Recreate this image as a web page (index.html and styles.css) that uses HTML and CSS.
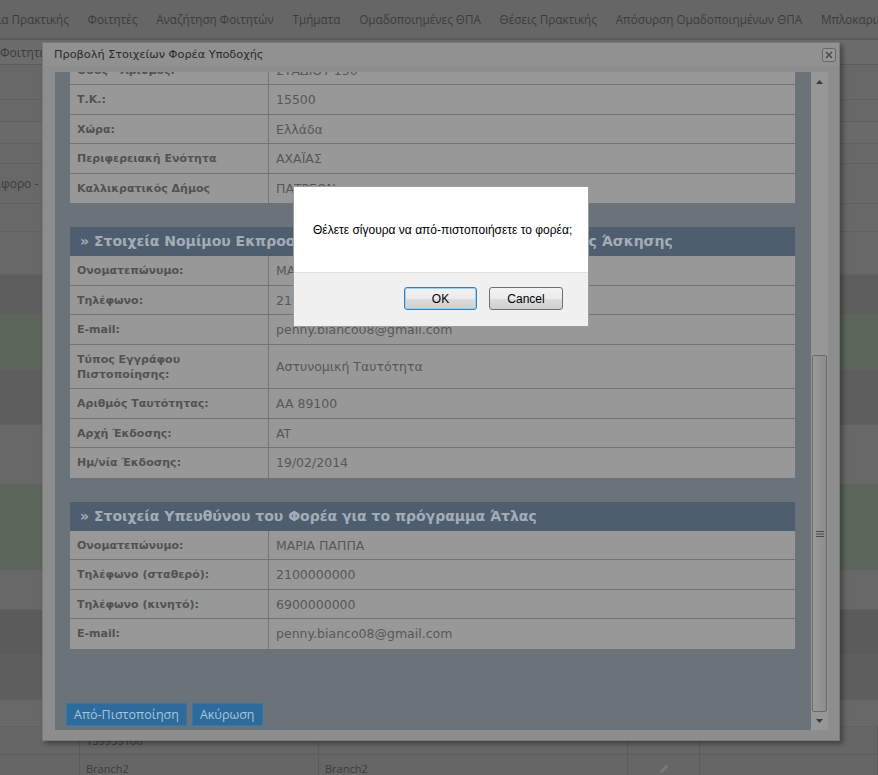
FILE: index.html
```html
<!DOCTYPE html>
<html lang="el">
<head>
<meta charset="utf-8">
<title>Προβολή Στοιχείων Φορέα Υποδοχής</title>
<link rel="stylesheet" href="styles.css">
</head>
<body>
<div class="page">
  <nav class="topnav">
    <a class="nav-first">ία Πρακτικής</a>
    <a>Φοιτητές</a>
    <a>Αναζήτηση Φοιτητών</a>
    <a>Τμήματα</a>
    <a>Ομαδοποιημένες ΘΠΑ</a>
    <a>Θέσεις Πρακτικής</a>
    <a>Απόσυρση Ομαδοποιημένων ΘΠΑ</a>
    <a>Μπλοκαρισμένοι Φοιτητές</a>
  </nav>
  <div class="subnav"><span>Φοιτητές</span></div>
  <div class="bg-list">
    <div class="bg-row h35"></div>
    <div class="bg-row h22"></div>
    <div class="bg-row h22 alt"></div>
    <div class="bg-row h20"></div>
    <div class="bg-row h40 with-text"><span class="clip-text">ιφορο -</span></div>
    <div class="bg-row h28"></div>
    <div class="bg-row h43"></div>
    <div class="bg-row h40 dark"></div>
    <div class="bg-row h55 green"></div>
    <div class="bg-row h55 dark"></div>
    <div class="bg-row h60"></div>
    <div class="bg-row h85 green"></div>
    <div class="bg-row h40"></div>
    <div class="bg-row h45 darker"></div>
    <div class="bg-row h45 dark"></div>
    <div class="bg-row h27"></div>
  </div>
  <div class="bg-table">
    <div class="bg-cell"></div><div class="bg-cell">159959100</div><div class="bg-cell"></div><div class="bg-cell"></div><div class="bg-cell"></div>
    <div class="bg-cell"></div><div class="bg-cell">Branch2</div><div class="bg-cell">Branch2</div>
    <div class="bg-cell icon-cell"><svg width="12" height="12" viewBox="0 0 12 12"><path d="M2 10 L3 7 L8 2 L10 4 L5 9 Z" fill="#7a7a7a"/></svg></div>
    <div class="bg-cell"></div>
  </div>
</div>

<div class="dialog">
  <div class="dlg-title">
    <span>Προβολή Στοιχείων Φορέα Υποδοχής</span>
    <span class="dlg-close"><svg width="14" height="14" viewBox="0 0 14 14"><rect x="0.5" y="0.5" width="13" height="13" rx="2" fill="#979797" stroke="#666"/><path d="M4 4 L10 10 M10 4 L4 10" stroke="#454545" stroke-width="1.4"/></svg></span>
  </div>
  <div class="dlg-body">
    <div class="scroll-view">
      <div class="scroll-content">
        <table class="info first-table">
          <tr><td class="lbl">Οδός - Αριθμός:</td><td class="val">ΣΤΑΔΙΟΥ 150</td></tr>
          <tr><td class="lbl">Τ.Κ.:</td><td class="val">15500</td></tr>
          <tr><td class="lbl">Χώρα:</td><td class="val">Ελλάδα</td></tr>
          <tr><td class="lbl">Περιφερειακή Ενότητα</td><td class="val">ΑΧΑΪΑΣ</td></tr>
          <tr><td class="lbl">Καλλικρατικός Δήμος</td><td class="val">ΠΑΤΡΕΩΝ</td></tr>
        </table>

        <div class="sec-head">» Στοιχεία Νομίμου Εκπροσώπου του Φορέα Υποδοχής Πρακτικής Άσκησης</div>
        <table class="info">
          <tr><td class="lbl">Ονοματεπώνυμο:</td><td class="val">ΜΑΡΙΑ ΠΑΠΠΑ</td></tr>
          <tr><td class="lbl">Τηλέφωνο:</td><td class="val">2100000000</td></tr>
          <tr><td class="lbl">E-mail:</td><td class="val">penny.bianco08@gmail.com</td></tr>
          <tr><td class="lbl">Τύπος Εγγράφου Πιστοποίησης:</td><td class="val">Αστυνομική Ταυτότητα</td></tr>
          <tr><td class="lbl">Αριθμός Ταυτότητας:</td><td class="val">AA 89100</td></tr>
          <tr><td class="lbl">Αρχή Έκδοσης:</td><td class="val">AT</td></tr>
          <tr><td class="lbl">Ημ/νία Έκδοσης:</td><td class="val">19/02/2014</td></tr>
        </table>

        <div class="sec-head">» Στοιχεία Υπευθύνου του Φορέα για το πρόγραμμα Άτλας</div>
        <table class="info">
          <tr><td class="lbl">Ονοματεπώνυμο:</td><td class="val">ΜΑΡΙΑ ΠΑΠΠΑ</td></tr>
          <tr><td class="lbl">Τηλέφωνο (σταθερό):</td><td class="val">2100000000</td></tr>
          <tr><td class="lbl">Τηλέφωνο (κινητό):</td><td class="val">6900000000</td></tr>
          <tr><td class="lbl">E-mail:</td><td class="val">penny.bianco08@gmail.com</td></tr>
        </table>

        <div class="dlg-actions">
          <button class="dlg-btn">Από-Πιστοποίηση</button>
          <button class="dlg-btn">Ακύρωση</button>
        </div>
      </div>
    </div>
    <div class="scrollbar">
      <div class="sb-up"><svg width="7" height="4" viewBox="0 0 7 4"><path d="M0 4 L3.5 0 L7 4 Z" fill="#3c3c3c"/></svg></div>
      <div class="sb-track">
        <div class="sb-space"></div>
        <div class="sb-thumb"><svg width="8" height="6" viewBox="0 0 8 6"><path d="M0 0.5 H8 M0 3 H8 M0 5.5 H8" stroke="#4a4a4a" stroke-width="1"/></svg></div>
      </div>
      <div class="sb-down"><svg width="7" height="4" viewBox="0 0 7 4"><path d="M0 0 L3.5 4 L7 0 Z" fill="#3c3c3c"/></svg></div>
    </div>
  </div>
</div>

<div class="alert">
  <div class="alert-msg">Θέλετε σίγουρα να από-πιστοποιήσετε το φορέα;</div>
  <div class="alert-actions">
    <button class="alert-btn default">OK</button>
    <button class="alert-btn cancel">Cancel</button>
  </div>
</div>
</body>
</html>
```

FILE: styles.css
```css
html, body {
  margin: 0;
  padding: 0;
}
body {
  width: 878px;
  height: 775px;
  overflow: hidden;
  background: #666666;
  font-family: "Open Sans", "DejaVu Sans", sans-serif;
  position: relative;
}

/* ---------- background page ---------- */
.page {
  width: 878px;
  height: 775px;
  overflow: hidden;
}
.topnav {
  height: 38px;
  display: flex;
  align-items: center;
  white-space: nowrap;
  overflow: hidden;
  background: #666666;
  border-bottom: 2px solid #5a5a5a;
}
.topnav a {
  padding: 0 9.4px;
  font-size: 11.7px;
  color: #3c3c3c;
  flex: none;
}
.topnav .nav-first {
  margin-left: -12px;
}
.subnav {
  height: 24px;
  background: #6c6c6c;
  border-bottom: 1px solid #5c5c5c;
  display: flex;
  align-items: center;
  font-size: 12px;
  color: #3c3c3c;
}
.bg-row {
  box-sizing: border-box;
  background: #686868;
  border-bottom: 1px solid #616161;
}
.bg-row.alt { background: #6a6a6a; }
.bg-row.dark { background: #5e5e5e; }
.bg-row.darker { background: #5b5b5b; }
.bg-row.green { background: #5a675a; }
.h20 { height: 20px; }
.h22 { height: 22px; }
.h27 { height: 27px; }
.h28 { height: 28px; }
.h35 { height: 35px; }
.h40 { height: 40px; }
.h43 { height: 43px; }
.h45 { height: 45px; }
.h55 { height: 55px; }
.h60 { height: 60px; }
.h85 { height: 85px; }
.with-text {
  display: flex;
  align-items: center;
  overflow: hidden;
  white-space: nowrap;
}
.clip-text {
  font-size: 12px;
  color: #3c3c3c;
  margin-left: -3px;
}
.bg-table {
  display: grid;
  grid-template-columns: 80px 239px 309px 72px 1fr;
  grid-auto-rows: 28px;
  background: #666666;
}
.bg-cell {
  box-sizing: border-box;
  border-right: 1px solid #5c5c5c;
  border-bottom: 1px solid #5c5c5c;
  font-size: 11px;
  color: #3c3c3c;
  padding-left: 6px;
  display: flex;
  align-items: center;
}
.icon-cell {
  justify-content: center;
  padding-left: 0;
}

/* ---------- dialog ---------- */
.dialog {
  position: absolute;
  left: 42px;
  top: 42px;
  width: 798px;
  height: 699px;
  box-sizing: border-box;
  background: #8d8d8d;
  border: 1px solid #7a7a7a;
  box-shadow: 3px 3px 5px rgba(0, 0, 0, 0.35);
  display: flex;
  flex-direction: column;
}
.dlg-title {
  height: 23px;
  flex: none;
  display: flex;
  align-items: center;
  justify-content: space-between;
  padding: 0 3px 0 11px;
  background: #919191;
  font-family: "DejaVu Sans", Verdana, sans-serif;
  font-size: 11.3px;
  color: #2a2a2a;
}
.dlg-close {
  display: flex;
  width: 14px;
  height: 14px;
}
.dlg-body {
  flex: 1;
  display: flex;
  padding: 6px 11px 10px 12px;
  min-height: 0;
}
.scroll-view {
  flex: 1;
  overflow: hidden;
  background: #6b737a;
}
.scroll-content {
  margin-top: -16.5px;
  padding: 0 16px 0 11px;
}
.info {
  margin-left: 4px;
  width: calc(100% - 4px);
  border-collapse: collapse;
  font-family: "DejaVu Sans", Verdana, sans-serif;
}
.info td {
  background: #989898;
  border-bottom: 1px solid #737373;
  padding: 7px 7px 6.5px 7px;
  line-height: 15px;
  vertical-align: middle;
}
.info tr:last-child td {
  border-bottom: none;
  padding-bottom: 7.5px;
}
.info .lbl {
  width: 184px;
  border-right: 1px solid #767676;
  font-size: 11px;
  font-weight: bold;
  color: #525252;
}
.info .val {
  font-size: 12.5px;
  color: #575757;
}
.sec-head {
  margin: 24px 0 0 4px;
  height: 29px;
  line-height: 29px;
  padding-left: 10px;
  background: #4f5e6f;
  font-family: "DejaVu Sans", Verdana, sans-serif;
  font-weight: bold;
  font-size: 14px;
  color: #a3adb8;
  white-space: nowrap;
  overflow: hidden;
}
.dlg-actions {
  margin-top: 54px;
  display: flex;
  gap: 5px;
}
.dlg-btn {
  height: 23px;
  padding: 0 7px;
  border: 1px solid #3775a3;
  background: #2c6b9b;
  color: #a9c5dd;
  font-family: "Open Sans", sans-serif;
  font-size: 12.5px;
  line-height: 21px;
  cursor: pointer;
}

/* scrollbar */
.scrollbar {
  width: 17px;
  flex: none;
  display: flex;
  flex-direction: column;
  background: #979797;
}
.sb-up {
  height: 20px;
  display: flex;
  align-items: center;
  justify-content: center;
}
.sb-track {
  flex: 1;
  display: flex;
  flex-direction: column;
}
.sb-space {
  flex: 1;
}
.sb-thumb {
  height: 357px;
  margin: 0 1px;
  box-sizing: border-box;
  border: 1px solid #6a6a6a;
  border-radius: 2px;
  background: linear-gradient(to right, #9a9a9a, #8c8c8c);
  display: flex;
  align-items: center;
  justify-content: center;
}
.sb-down {
  height: 18px;
  display: flex;
  align-items: center;
  justify-content: center;
}

/* ---------- alert ---------- */
.alert {
  position: absolute;
  left: 293px;
  top: 186px;
  width: 296px;
  height: 141px;
  box-sizing: border-box;
  background: #ffffff;
  border: 1px solid #9c9c9c;
  display: flex;
  flex-direction: column;
  font-family: "Liberation Sans", Arial, sans-serif;
  font-size: 12px;
  color: #000000;
}
.alert-msg {
  height: 85px;
  flex: none;
  display: flex;
  align-items: center;
  padding-left: 19px;
}
.alert-actions {
  flex: 1;
  background: #f0f0f0;
  border-top: 1px solid #dfdfdf;
  display: flex;
  justify-content: flex-end;
  align-items: flex-start;
  gap: 12px;
  padding: 14px 25px 0 0;
}
.alert-btn {
  height: 23px;
  box-sizing: border-box;
  border: 1px solid #707070;
  border-radius: 3px;
  background: linear-gradient(#f2f2f2 0%, #ebebeb 50%, #dddddd 51%, #cfcfcf 100%);
  font-family: "Liberation Sans", Arial, sans-serif;
  font-size: 12px;
  color: #000000;
  padding: 0;
}
.alert-btn.default {
  width: 73px;
  border-color: #3c7fb1;
  box-shadow: inset 0 0 0 1px #9ad3f2;
}
.alert-btn.cancel {
  width: 74px;
}
```
